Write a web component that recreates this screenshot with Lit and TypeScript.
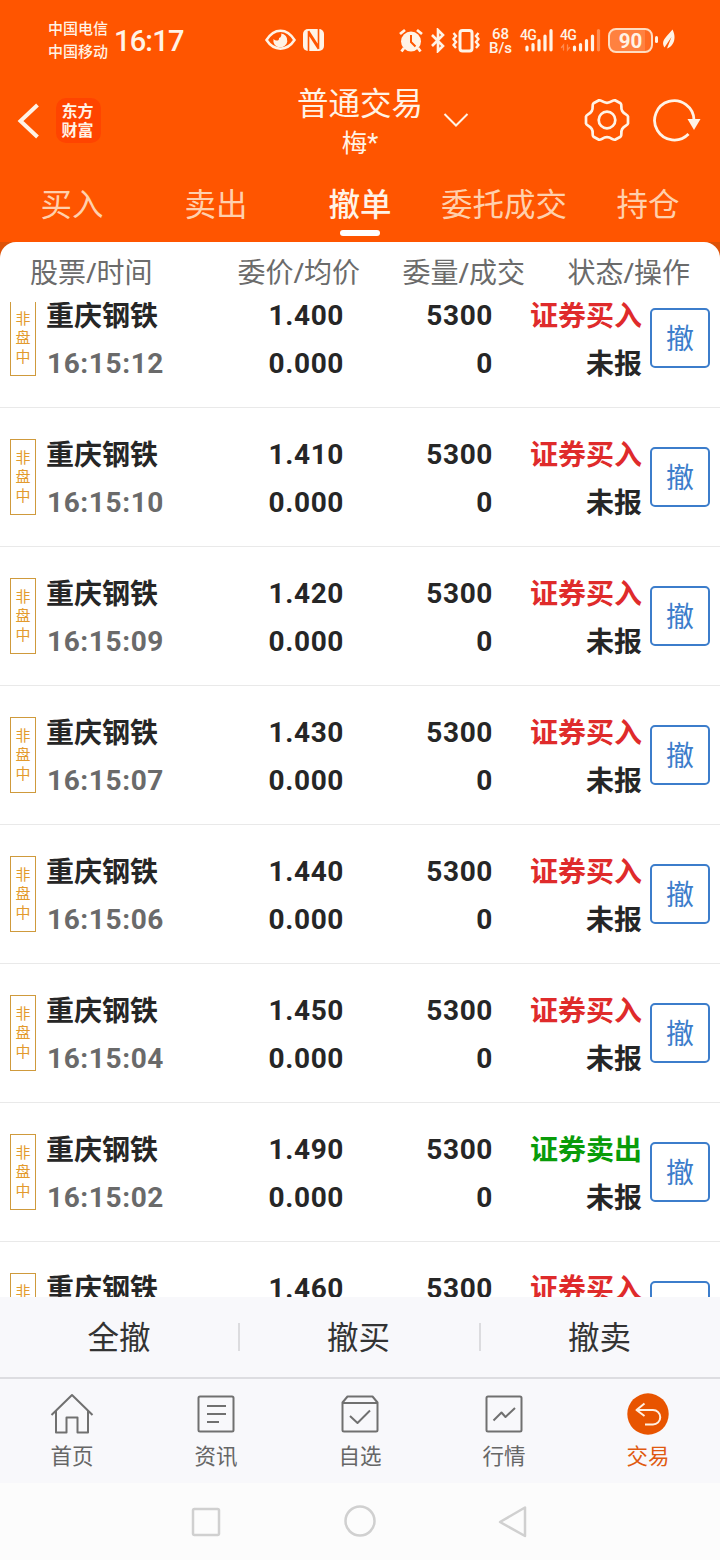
import { LitElement, html, css, svg } from "lit";
import { customElement, property } from "lit/decorators.js";
import { classMap } from "lit/directives/class-map.js";

interface Order {
  time: string;
  price: string;
  sell?: boolean;
}

const ORDERS: Order[] = [
  { time: "16:15:12", price: "1.400" },
  { time: "16:15:10", price: "1.410" },
  { time: "16:15:09", price: "1.420" },
  { time: "16:15:07", price: "1.430" },
  { time: "16:15:06", price: "1.440" },
  { time: "16:15:04", price: "1.450" },
  { time: "16:15:02", price: "1.490", sell: true },
  { time: "", price: "1.460" },
];

@customElement("status-bar")
class StatusBar extends LitElement {
  static styles = css`
    :host { display: flex; align-items: center; height: 80px; padding-left: 48px; color: #fff3e6; }
    svg { display: block; flex: none; }
    .carriers { width: 66px; font-size: 15px; line-height: 23px; font-weight: 500; white-space: nowrap; }
    .time { width: 151px; padding-top: 2px; font-family: Roboto, sans-serif; font-size: 29px; line-height: 40px; letter-spacing: -0.8px; font-weight: 500; }
    .eye { margin-right: 7px; }
    .nfc { margin-right: 75px; }
    .alarm { margin-right: 8px; }
    .bt { margin-right: 7px; }
    .vib { margin-right: 8px; }
    .speed { width: 25px; margin-right: 7px; padding-top: 2px; text-align: center; font-family: Roboto, sans-serif; font-size: 15px; line-height: 14px; font-weight: 500; white-space: nowrap; }
    .speed div { height: 14px; }
    .signal { position: relative; width: 40px; height: 26px; }
    .signal .net { position: absolute; left: 0; top: 1px; font-family: Roboto, sans-serif; font-size: 14px; line-height: 14px; font-weight: 500; letter-spacing: -0.8px; }
    .signal svg { position: absolute; left: 0; top: 0; }
    .battery { box-sizing: border-box; width: 45px; height: 25px; margin-left: 8px; border: 2px solid #ffdcc0; border-radius: 8px;
      background: linear-gradient(90deg, #ff8140 86%, #ff6a20 86%); text-align: center; font-family: Roboto, sans-serif; font-size: 20.500px; line-height: 22px; font-weight: 700; }
    .leaf { margin-left: 1px; }
  `;
  render() {
    return html`
      <div class="carriers">中国电信<br />中国移动</div>
      <div class="time">16:17</div>
      <svg class="eye" width="31" height="24" viewBox="0 0 31 24">
        <path d="M1.500 12C9 -.5 22 -.5 29.500 12 22 23.500 9 23.500 1.500 12Z" fill="none" stroke="#fff3e6" stroke-width="2.500" />
        <path d="M16 5.500A7 7 0 1 1 8.500 11C11 13.500 14.500 13 14 10 15.800 10 17 7 16 5.500Z" fill="#fff3e6" />
      </svg>
      <svg class="nfc" width="21" height="24" viewBox="0 0 21 24">
        <rect x="0" y="1" width="21" height="22" rx="5" fill="#fff3e6" />
        <path d="M5.500 24V5.500L15.500 21M15.500 0V18.500L5.500 3" fill="none" stroke="#ff5500" stroke-width="1.600" />
      </svg>
      <svg class="alarm" width="24" height="25" viewBox="0 0 24 25">
        <circle cx="12" cy="13.500" r="10" fill="#fff3e6" />
        <path d="M1 6 6 2M23 6 18 2M5 20l-2.500 3.500M19 20l2.500 3.500" stroke="#fff3e6" stroke-width="2.800" fill="none" />
        <path d="M12 7v7l4.500 4.500" stroke="#ff5500" stroke-width="2" fill="none" />
      </svg>
      <svg class="bt" width="14" height="25" viewBox="0 0 14 25">
        <path d="M1 7l11 11-5 5V2l5 5L1 18" fill="none" stroke="#fff3e6" stroke-width="2.600" />
      </svg>
      <svg class="vib" width="28" height="25" viewBox="0 0 28 25">
        <rect x="8" y="2.500" width="12" height="20.500" rx="2.500" fill="none" stroke="#fff3e6" stroke-width="3" />
        <path d="M1.500 5l2.500 3-2.500 3 2.500 3-2.500 3 2.500 3M26.500 5l-2.500 3 2.500 3-2.500 3 2.500 3-2.500 3" fill="none" stroke="#fff3e6" stroke-width="2.400" />
      </svg>
      <div class="speed"><div>68</div><div>B/s</div></div>
      <div class="signal">
        <span class="net">4G</span>
        <svg width="34" height="26" viewBox="0 0 34 26" fill="none" stroke="#fff3e6" stroke-width="3.200" stroke-linecap="round">
          <path d="M7 20V22.800M13 17.500V22.800M19 13.500V22.800M25 9V22.800M31 3.500V22.800" />
        </svg>
      </div>
      <div class="signal">
        <span class="net">4G</span>
        <svg width="41" height="26" viewBox="0 0 41 26" fill="none" stroke="#fff3e6" stroke-width="3.200" stroke-linecap="round">
          <path d="M14.500 20V22.800M20.500 17.500V22.800M26.500 13.500V22.800M32.500 9V22.800" />
          <path d="M38.500 3.500V22.800" opacity=".35" />
          <path d="M1.500 20.500l2-2.500v5M7.500 18v5l2-2.500" opacity=".35" stroke-width="1.300" />
        </svg>
      </div>
      <div class="battery">90</div>
      <svg class="leaf" width="22" height="24" viewBox="0 0 22 24">
        <rect x="1" y="8" width="3" height="7" rx="1.500" fill="#fff3e6" />
        <path d="M18.500 1.500C22.500 9 20.500 18 13 20.500L17.500 9 10.500 19.500C6.500 13 11.500 10 18.500 1.500Z" fill="#fff3e6" />
      </svg>
    `;
  }
}

@customElement("order-row")
class OrderRow extends LitElement {
  @property({ attribute: false }) order!: Order;
  static styles = css`
    :host { box-sizing: border-box; display: grid; flex: none; grid-template-columns: 36px 152px 146px 149px 149px 69px; align-items: center;
      height: 139px; padding: 0 9px 0 10px; border-bottom: 1px solid #e9e9e9; }
    .tag { box-sizing: border-box; width: 26px; height: 76px; padding-top: 8px; border: 1px solid #cf9a3c; color: #e39a2c;
      font-size: 15px; line-height: 19px; text-align: center; }
    .tag span { display: block; }
    .cell { padding-top: 1px; color: #262626; font-size: 28px; line-height: 48px; font-weight: 700; text-align: right; white-space: nowrap; }
    .cell div { height: 48px; }
    .name { text-align: left; }
    .num, .cell .time { font-family: Roboto, sans-serif; letter-spacing: 0.6px; line-height: 50px; }
    .time { padding-left: 1px; color: #6a6a6a; }
    .buy { color: #df2b2b; }
    .sell { color: #099c09; }
    .cancel { box-sizing: border-box; width: 60px; height: 60px; margin-left: 8px; border: 2px solid #3c7dcb; border-radius: 5px;
      color: #3c7dcb; font-size: 28px; line-height: 56px; text-align: center; }
  `;
  render() {
    const o = this.order;
    return html`
      <div class="tag"><span>非</span><span>盘</span><span>中</span></div>
      <div class="cell name"><div>重庆钢铁</div><div class="time">${o.time}</div></div>
      <div class="cell num"><div>${o.price}</div><div>0.000</div></div>
      <div class="cell num"><div>5300</div><div>0</div></div>
      <div class="cell">
        <div class=${classMap({ buy: !o.sell, sell: !!o.sell })}>${o.sell ? "证券卖出" : "证券买入"}</div>
        <div>未报</div>
      </div>
      <div class="cancel">撤</div>
    `;
  }
}

const TABS = ["买入", "卖出", "撤单", "委托成交", "持仓"];

const NAV = [
  { label: "首页", icon: svg`<path d="M1.500 22 22 2 42.500 22M6 18V39.500H16.500V24.500H27.500V39.500H38V18" />` },
  { label: "资讯", icon: svg`<rect x="4.500" y="3.500" width="35" height="35" rx="1.500" /><path d="M13 13H32M13 21H32M13 29H25" />` },
  { label: "自选", icon: svg`<path d="M4.500 9.500V37A1.500 1.500 0 0 0 6 38.500H38A1.500 1.500 0 0 0 39.500 37V9.500L34.500 3.500H9.500ZM4.500 10H39.500M12 23l7.500 7L32 17.500" />` },
  { label: "行情", icon: svg`<rect x="4.500" y="3.500" width="35" height="35" rx="1.500" /><path d="M11.500 27.500 19.500 19.500 23.500 24 33 15" />` },
  { label: "交易", icon: svg`<circle cx="22" cy="21" r="20.700" fill="#e85400" stroke="none" /><path d="M19 31.500H27A7.200 7.200 0 0 0 27 17H10.500M18.500 10.500 10.500 17 18.500 23" stroke="#fff0e2" />` },
];

@customElement("app-root")
class AppRoot extends LitElement {
  static styles = css`
    :host { display: flex; flex-direction: column; width: 720px; height: 1560px; overflow: hidden; background: #fff;
      font-family: "Noto Sans", "Noto Sans CJK SC", sans-serif; }
    .top { flex: none; height: 242px; background: #ff5500; color: #fff3e6; }
    .title-bar { display: grid; grid-template-columns: 1fr 250px 1fr; height: 88px; align-items: center; }
    .left { display: flex; align-items: center; gap: 15px; padding: 0 0 7px 17px; }
    .logo { width: 45px; height: 45px; box-sizing: border-box; padding: 3px 2px 0 0; border-radius: 10px; background: #ff4400;
      font-family: "Noto Sans CJK SC", sans-serif; font-size: 16px; line-height: 19px; font-weight: 700; text-align: center; }
    .titles { display: flex; flex-direction: column; align-items: center; height: 88px; }
    .title { font-size: 31.5px; line-height: 46px; }
    .user { font-size: 25.500px; line-height: 32px; }
    .user span { font-family: Roboto, sans-serif; }
    .right { display: flex; align-items: center; padding-bottom: 8px; }
    .chev { margin: 0 115px 0 -42px; }
    .gear { margin-right: 22px; }
    svg { display: block; flex: none; }
    .tabs { display: grid; grid-template-columns: repeat(5, 144px); height: 74px; }
    .tab { display: flex; flex-direction: column; align-items: center; font-size: 31.500px; line-height: 72px; color: #ffd0ad; height: 74px; }
    .tab.active { color: #fff3e6; font-weight: 500; }
    .tab.active::after { content: ""; width: 40px; height: 6px; margin-top: -10px; border-radius: 3px; background: #fff; }
    .sheet { flex: none; height: 60px; background: #dd5208; }
    .columns { display: grid; grid-template-columns: 1fr 165px 165px 165px; height: 60px; padding: 0 30px; border-radius: 16px 16px 0 0;
      background: #fff; color: #6b6b6b; font-size: 28px; line-height: 61px; text-align: right; white-space: nowrap; }
    .columns .first { text-align: left; }
    .list { flex: none; height: 995px; overflow: hidden; display: flex; flex-direction: column; }
    .rows { display: flex; flex-direction: column; margin-top: -33px; }
    .actions { flex: none; display: grid; grid-template-columns: 238px 2px 239px 2px 239px; align-items: center; height: 80px; background: #f8f8fb; color: #333; }
    .action { font-size: 31.500px; line-height: 80px; text-align: center; }
    .action:not(:first-child) { padding-right: 2px; }
    .rule { height: 28px; background: #dcdcdf; }
    .nav { flex: none; box-sizing: border-box; display: grid; grid-template-columns: repeat(5, 144px); height: 106px; border-top: 2px solid #dddde1; background: #f8f8fb; color: #666; }
    .item { display: flex; flex-direction: column; align-items: center; padding-top: 14px; font-size: 21.500px; line-height: 30px; }
    .item svg { margin-bottom: 6px; fill: none; stroke: #707070; stroke-width: 2; stroke-linejoin: round; }
    .item.on { color: #e05a10; }
    .system { flex: none; height: 77px; display: flex; justify-content: center; align-items: center; gap: 120px; background: #fcfcfc; }
    .system svg { fill: none; stroke: #d0d0d0; stroke-width: 2.500; stroke-linejoin: round; }
  `;
  render() {
    return html`
      <div class="top">
        <status-bar></status-bar>
        <div class="title-bar">
          <div class="left">
            <svg width="24" height="38" viewBox="0 0 24 38"><path d="M20.500 3 3.500 19 20.500 35" fill="none" stroke="#fff3e6" stroke-width="4" /></svg>
            <div class="logo">东方<br />财富</div>
          </div>
          <div class="titles"><div class="title">普通交易</div><div class="user">梅<span>*</span></div></div>
          <div class="right">
            <svg class="chev" width="26" height="16" viewBox="0 0 26 16"><path d="M1.500 2 13 13.500 24.500 2" fill="none" stroke="#fff3e6" stroke-width="2" /></svg>
            <svg class="gear" width="46" height="46" viewBox="0 0 46 46" fill="none" stroke="#fff3e6" stroke-width="2.700" stroke-linejoin="round">
              <path d="M15 3.300C17.500 2.800 18.500 5.800 23 5.800S28.500 2.800 31 3.300L36.500 6.300C38.500 8 36.200 10.500 38.200 14S43.500 17.500 44 19.500V26.500C43.500 28.500 40.200 28.500 38.200 32S38.500 38 36.500 39.700L31 42.700C28.500 43.200 27.500 40.200 23 40.200S17.500 43.200 15 42.700L9.500 39.700C7.500 38 9.800 35.500 7.800 32S2.500 28.500 2 26.500V19.500C2.500 17.500 5.800 17.500 7.800 14S7.500 8 9.500 6.300Z" />
              <circle cx="23" cy="23" r="8.300" />
            </svg>
            <svg width="50" height="46" viewBox="0 0 50 46">
              <path d="M36.500 37A19.700 19.700 0 1 1 42 23" fill="none" stroke="#fff3e6" stroke-width="2.800" />
              <path d="M35.500 22H48.500L42 33Z" fill="#fff3e6" />
            </svg>
          </div>
        </div>
        <div class="tabs">
          ${TABS.map((t, i) => html`<div class=${classMap({ tab: true, active: i === 2 })}>${t}</div>`)}
        </div>
      </div>
      <div class="sheet">
        <div class="columns"><div class="first">股票/时间</div><div>委价/均价</div><div>委量/成交</div><div>状态/操作</div></div>
      </div>
      <div class="list">
        <div class="rows">${ORDERS.map((o) => html`<order-row .order=${o}></order-row>`)}</div>
      </div>
      <div class="actions">
        <div class="action">全撤</div><div class="rule"></div>
        <div class="action">撤买</div><div class="rule"></div>
        <div class="action">撤卖</div>
      </div>
      <div class="nav">
        ${NAV.map((n, i) => html`<div class=${classMap({ item: true, on: i === 4 })}>
          <svg width="44" height="42" viewBox="0 0 44 42">${n.icon}</svg>${n.label}</div>`)}
      </div>
      <div class="system">
        <svg width="34" height="34" viewBox="0 0 34 34"><rect x="4" y="4" width="26" height="26" rx="1.500" /></svg>
        <svg width="34" height="34" viewBox="0 0 34 34"><circle cx="17" cy="16" r="14.500" /></svg>
        <svg width="34" height="34" viewBox="0 0 34 34"><path d="M28 2.500V31L3 17Z" /></svg>
      </div>
    `;
  }
}
